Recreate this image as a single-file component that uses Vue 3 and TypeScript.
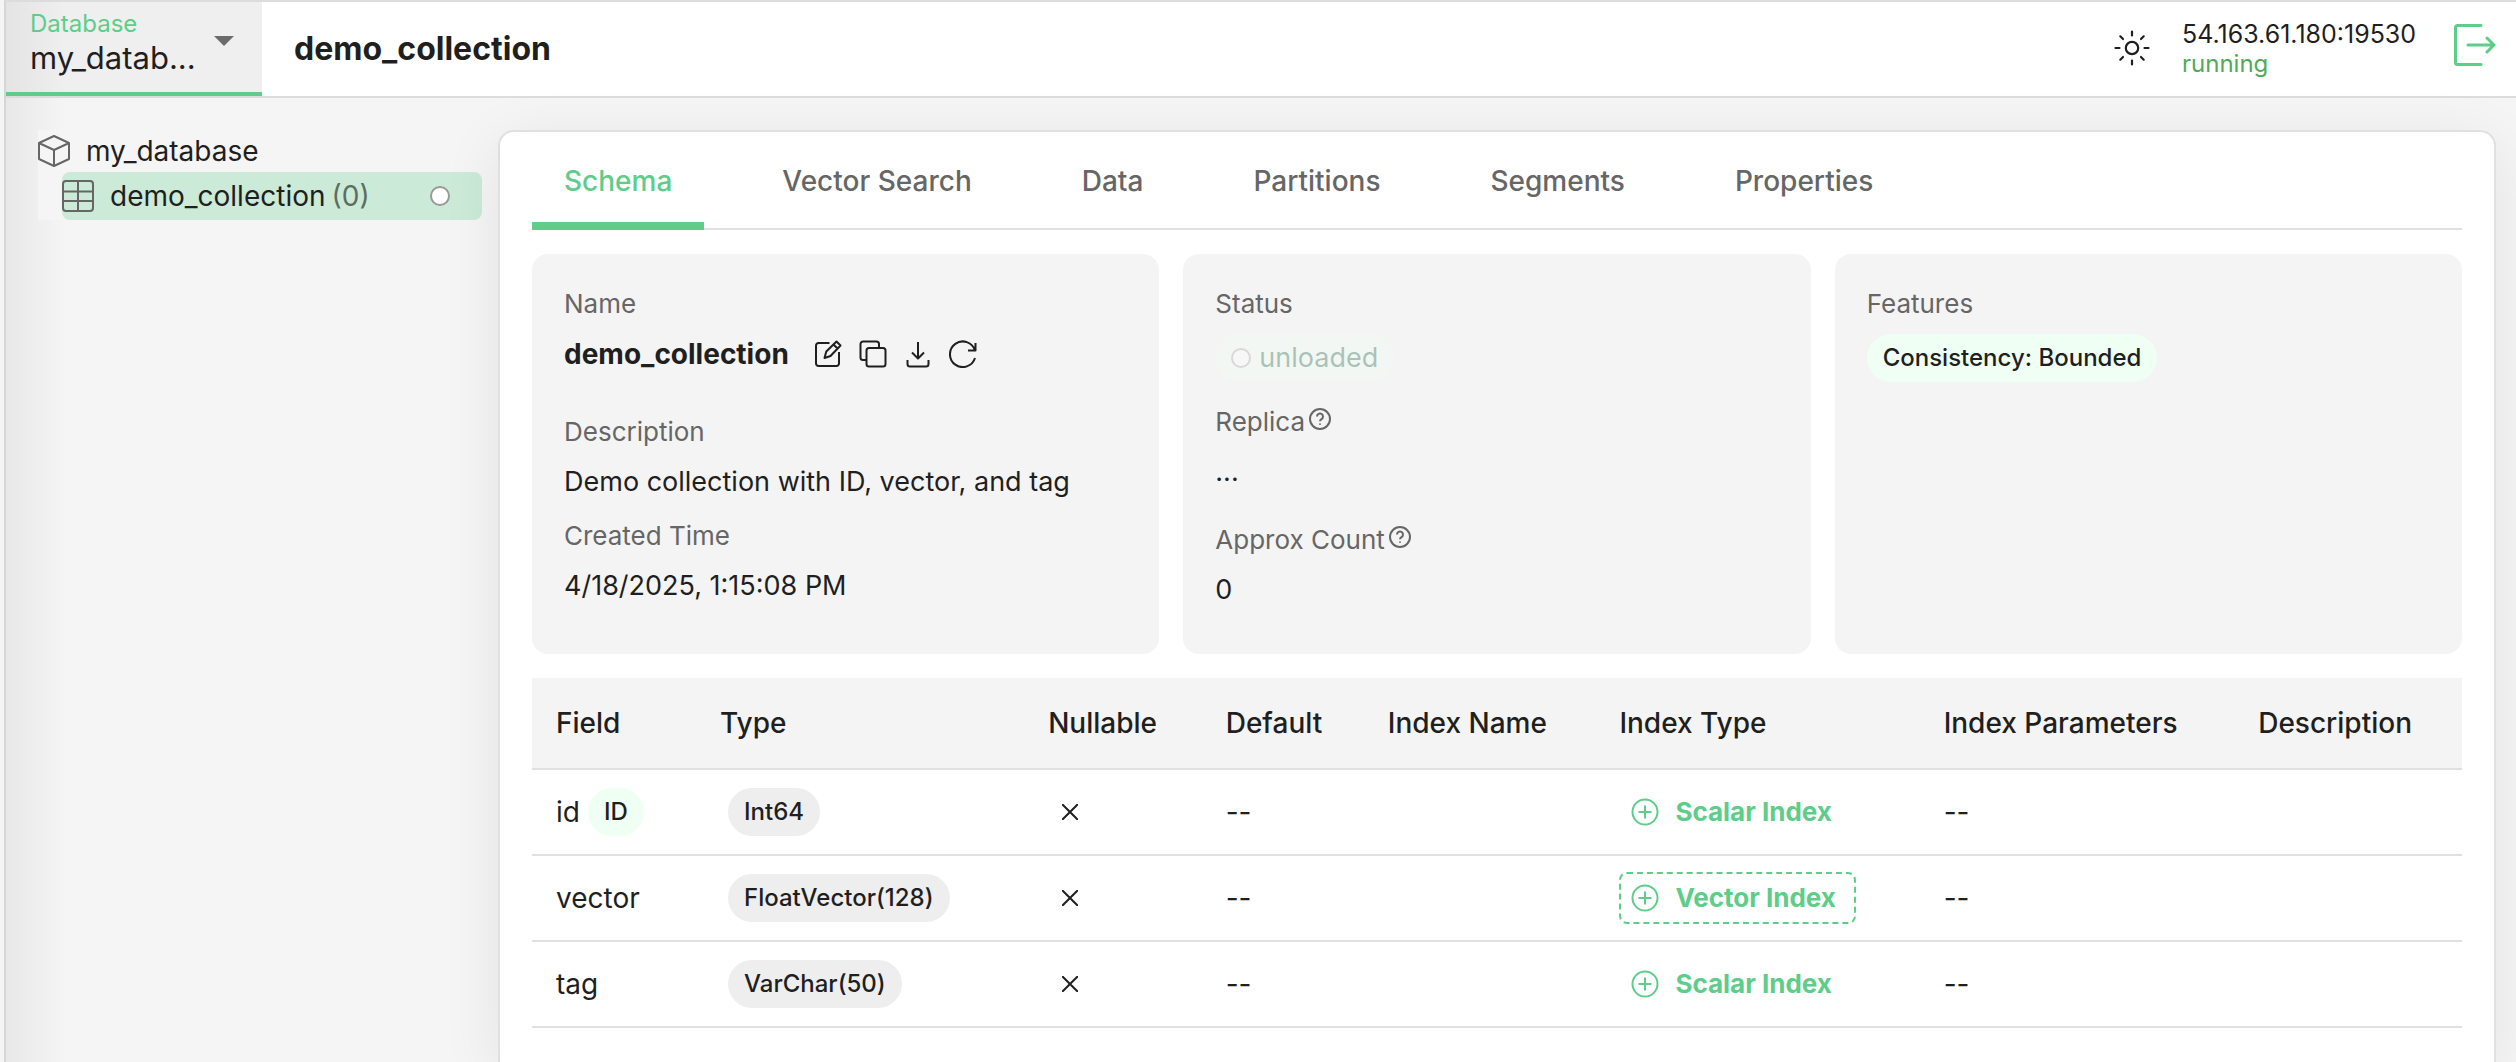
<script setup lang="ts">
import { ref } from 'vue'

interface FieldRow {
  name: string
  tag?: string
  type: string
  defaultValue: string
  index: string
  highlighted?: boolean
  params: string
}

const tabs: string[] = ['Schema', 'Vector Search', 'Data', 'Partitions', 'Segments', 'Properties']
const activeTab = ref<string>('Schema')

const fields: FieldRow[] = [
  { name: 'id', tag: 'ID', type: 'Int64', defaultValue: '--', index: 'Scalar Index', params: '--' },
  { name: 'vector', type: 'FloatVector(128)', defaultValue: '--', index: 'Vector Index', highlighted: true, params: '--' },
  { name: 'tag', type: 'VarChar(50)', defaultValue: '--', index: 'Scalar Index', params: '--' },
]
</script>

<template>
  <div class="app">
    <header class="topbar">
      <div class="db-select">
        <label class="db-label" for="database">Database</label>
        <select id="database" class="db-input">
          <option>my_datab...</option>
        </select>
        <svg class="db-arrow" viewBox="0 0 20 10" aria-hidden="true"><path d="M0 0h20L10 10z" fill="#6b6b6b" /></svg>
      </div>
      <h1 class="title">demo_collection</h1>
      <button class="icon-btn theme" aria-label="Toggle theme">
        <svg width="36" height="36" viewBox="0 0 36 36" fill="none" stroke="#1f1f1f" stroke-width="2.2" stroke-linecap="round">
          <circle cx="18" cy="18" r="6.200" />
          <path d="M18 1.500v4M18 30.500v4M1.500 18h4M30.500 18h4M6.300 6.300l2.700 2.700M27 27l2.700 2.700M6.300 29.700L9 27M27 9l2.700-2.700" />
        </svg>
      </button>
      <div class="server">
        <span class="address">54.163.61.180:19530</span>
        <span class="running">running</span>
      </div>
      <button class="icon-btn logout" aria-label="Disconnect">
        <svg width="42" height="42" viewBox="0 0 42 42" fill="none" stroke="#5ecd8a" stroke-width="3" stroke-linecap="round" stroke-linejoin="round">
          <path d="M27 1.500H3.500a2 2 0 0 0-2 2v35a2 2 0 0 0 2 2H27" />
          <path d="M14 21h25M33 14l7 7-7 7" stroke-linejoin="miter" />
        </svg>
      </button>
    </header>

    <div class="body">
      <nav class="tree">
        <a class="node" href="#database">
          <svg width="32" height="32" viewBox="0 0 32 32" fill="none" stroke="#666" stroke-width="2" stroke-linejoin="round">
            <path d="M16 1l15 7v16l-15 7L1 24V8zM1 8l15 7 15-7M16 15v16" />
          </svg>
          <span class="node-text">my_database</span>
        </a>
        <a class="node child" href="#collection">
          <svg width="32" height="32" viewBox="0 0 32 32" fill="none" stroke="#666" stroke-width="2">
            <rect x="1" y="1" width="30" height="30" rx="3" /><path d="M1 11.500h30M1 21h30M16 1v30" />
          </svg>
          <span class="node-text">demo_collection</span>
          <span class="count">(0)</span>
          <i class="dot"></i>
        </a>
      </nav>

      <main class="panel">
        <div class="tabs" role="tablist">
          <button
            v-for="tab in tabs"
            :key="tab"
            class="tab"
            :class="{ active: tab === activeTab }"
            role="tab"
            :aria-selected="tab === activeTab"
            @click="activeTab = tab"
          >{{ tab }}</button>
        </div>

        <section class="cards">
          <div class="card">
            <div class="label">Name</div>
            <div class="name-row">
              <strong>demo_collection</strong>
              <button class="icon-btn" aria-label="Rename">
                <svg class="tool" viewBox="0 0 28 28"><path d="M15.500 3H4.500A2.500 2.500 0 0 0 2 5.500v18A2.500 2.500 0 0 0 4.500 26h18a2.500 2.500 0 0 0 2.500-2.500V12M10.500 18l1.800-6.500L22.500 1.500l4 4L16.500 16zM19.500 4.500l4 4" /></svg>
              </button>
              <button class="icon-btn" aria-label="Duplicate">
                <svg class="tool" viewBox="0 0 28 28"><rect x="7.500" y="8" width="19" height="18.500" rx="2.500" /><path d="M7.500 20H4a2.500 2.500 0 0 1-2.500-2.500V4A2.500 2.500 0 0 1 4 1.500h13.500A2.500 2.500 0 0 1 20 4v4" /></svg>
              </button>
              <button class="icon-btn" aria-label="Download">
                <svg class="tool" viewBox="0 0 28 28"><path d="M14 2v16M8 12.500l6 6 6-6M3.500 20v4A2.500 2.500 0 0 0 6 26.500h16a2.500 2.500 0 0 0 2.500-2.500v-4" /></svg>
              </button>
              <button class="icon-btn" aria-label="Refresh">
                <svg class="tool" viewBox="0 0 28 28"><path d="M26.500 3v7.500H19M26 10.500A12.800 12.800 0 1 0 26 18" /></svg>
              </button>
            </div>
            <div class="label description">Description</div>
            <div class="value">Demo collection with ID, vector, and tag</div>
            <div class="label">Created Time</div>
            <div class="value">4/18/2025, 1:15:08 PM</div>
          </div>

          <div class="card">
            <div class="label">Status</div>
            <div class="pill status"><i class="dot"></i>unloaded</div>
            <div class="label replica">Replica
              <svg class="help" viewBox="0 0 22 22"><circle cx="11" cy="11" r="10" /><path d="M8 8.500a3 3 0 1 1 4.500 2.600c-1 .6-1.500 1.100-1.500 2.200M11 15.500v1.200" /></svg>
            </div>
            <div class="value">...</div>
            <div class="label approx">Approx Count
              <svg class="help" viewBox="0 0 22 22"><circle cx="11" cy="11" r="10" /><path d="M8 8.500a3 3 0 1 1 4.500 2.600c-1 .6-1.500 1.100-1.500 2.200M11 15.500v1.200" /></svg>
            </div>
            <div class="value">0</div>
          </div>

          <div class="card">
            <div class="label">Features</div>
            <div class="pill">Consistency: Bounded</div>
          </div>
        </section>

        <table class="fields">
          <colgroup>
            <col class="c-field" /><col class="c-type" /><col class="c-null" /><col class="c-default" />
            <col class="c-iname" /><col class="c-itype" /><col class="c-params" /><col />
          </colgroup>
          <thead>
            <tr>
              <th>Field</th><th>Type</th><th>Nullable</th><th>Default</th>
              <th>Index Name</th><th>Index Type</th><th>Index Parameters</th><th>Description</th>
            </tr>
          </thead>
          <tbody>
            <tr v-for="field in fields" :key="field.name">
              <td><div class="cell">{{ field.name }}<span v-if="field.tag" class="pill">{{ field.tag }}</span></div></td>
              <td><div class="cell"><span class="pill type">{{ field.type }}</span></div></td>
              <td>
                <div class="cell">
                  <svg class="cross" viewBox="0 0 16 16" role="img" aria-label="No"><path d="M0 0l16 16M16 0L0 16" /></svg>
                </div>
              </td>
              <td>{{ field.defaultValue }}</td>
              <td></td>
              <td>
                <button class="index-btn" :class="{ highlighted: field.highlighted }">
                  <svg width="28" height="28" viewBox="0 0 28 28" fill="none" stroke="#5ecd8a" stroke-width="2"><circle cx="14" cy="14" r="12.500" /><path d="M14 7.500v13M7.500 14h13" /></svg>
                  {{ field.index }}
                </button>
              </td>
              <td>{{ field.params }}</td>
              <td></td>
            </tr>
          </tbody>
        </table>
      </main>
    </div>
  </div>
</template>

<style>
body {
  background: #f5f5f5;
}
</style>

<style scoped>
.app {
  box-sizing: border-box;
  min-height: 100vh;
  display: flex;
  flex-direction: column;
  margin-left: 4px;
  border-left: 2px solid #d6d6d6;
  border-top: 2px solid #dcdcdc;
  background: linear-gradient(to right, #e8e8e8, #f5f5f5 60px);
  color: #1f1f1f;
  font-family: Inter, "Liberation Sans", sans-serif;
  font-size: 28px;
  line-height: 40px;
  overflow: hidden;
}
button {
  font: inherit;
  color: inherit;
  background: none;
  border: 0;
  padding: 0;
}
svg {
  display: block;
  flex: none;
}
.topbar {
  display: flex;
  align-items: center;
  height: 94px;
  padding-right: 20px;
  background: #fff;
  border-bottom: 2px solid #dcdcdc;
}
.db-select {
  box-sizing: border-box;
  position: relative;
  width: 256px;
  height: 94px;
  padding: 8px 24px;
  background: linear-gradient(to right, #e4e4e4, #efefef 60px);
  border-bottom: 4px solid #5ecd8a;
}
.db-label {
  display: block;
  font-size: 24px;
  line-height: 28px;
  color: #5ecd8a;
}
.db-input {
  appearance: none;
  display: block;
  width: 100%;
  height: 38px;
  padding: 0;
  border: 0;
  background: none;
  color: inherit;
  font-family: inherit;
  font-size: 31px;
}
.db-arrow {
  position: absolute;
  right: 28px;
  top: 34px;
  width: 20px;
  height: 10px;
}
.title {
  flex: 1;
  margin: 0 0 0 32px;
  font-size: 32px;
  font-weight: 700;
}
.icon-btn {
  display: block;
}
.theme {
  margin: 0 32px 2px 0;
}
.logout {
  margin-bottom: 8px;
}
.server {
  display: flex;
  flex-direction: column;
  min-width: 236px;
  margin-right: 36px;
  font-size: 24px;
  line-height: 30px;
}
.address {
  font-size: 25px;
}
.running {
  color: #4fab58;
}
.body {
  flex: 1;
  display: flex;
  align-items: stretch;
  padding: 32px 20px 0 32px;
}
.tree {
  flex: none;
  width: 444px;
  margin-right: 16px;
  align-self: flex-start;
  background: #f5f5f5;
}
.node {
  display: flex;
  align-items: center;
  height: 42px;
  color: inherit;
  text-decoration: none;
}
.node-text {
  margin-left: 16px;
}
.child {
  height: 48px;
  margin-left: 24px;
  border-radius: 8px;
  background: #cbead7;
}
.count {
  margin-left: 6px;
  color: #5c6e63;
}
.dot {
  box-sizing: border-box;
  width: 20px;
  height: 20px;
  border: 2px solid #999;
  border-radius: 50%;
  background: #fff;
}
.child .dot {
  margin: 0 32px 0 auto;
}
.panel {
  flex: 1;
  min-width: 0;
  padding: 0 32px;
  border: 2px solid #e0e0e0;
  border-bottom: 0;
  border-radius: 16px 16px 0 0;
  background: #fff;
  box-shadow: 0 12px 60px rgba(0, 0, 0, 0.08);
}
.tabs {
  display: flex;
  gap: 46px;
  height: 96px;
  border-bottom: 2px solid #e0e0e0;
}
.tab {
  height: 98px;
  padding: 8px 32px 0;
  border-bottom: 8px solid transparent;
  color: #666;
  font-weight: 500;
}
.tab.active {
  color: #5ecd8a;
  border-color: #5ecd8a;
}
.cards {
  display: grid;
  grid-template-columns: repeat(3, 1fr);
  gap: 24px;
  margin: 24px 0;
}
.card {
  box-sizing: border-box;
  min-height: 400px;
  padding: 32px 32px 24px;
  border-radius: 16px;
  background: #f4f4f4;
}
.label {
  display: flex;
  gap: 4px;
  color: #666;
  font-size: 26px;
  line-height: 36px;
}
.value {
  padding: 12px 0 16px;
  font-size: 27px;
}
.name-row {
  display: flex;
  align-items: center;
  gap: 17px;
  height: 40px;
  margin: 12px 0 16px;
}
.name-row strong {
  margin-right: 8px;
  font-weight: 700;
}
.description {
  padding-top: 24px;
}
.replica {
  padding-top: 22px;
}
.approx {
  padding-top: 14px;
}
.tool {
  width: 28px;
  height: 28px;
  fill: none;
  stroke: #1f1f1f;
  stroke-width: 2;
  stroke-linejoin: round;
}
.help {
  width: 22px;
  height: 22px;
  margin-top: 4px;
  fill: none;
  stroke: #666;
  stroke-width: 2;
}
.pill {
  display: inline-flex;
  align-items: center;
  height: 48px;
  padding: 0 16px;
  border-radius: 24px;
  background: #f0fff4;
  font-size: 24px;
  font-weight: 500;
}
.card .pill {
  display: flex;
  width: fit-content;
  margin-top: 12px;
}
.card .status {
  gap: 8px;
  color: #00532f;
  font-size: 27px;
  font-weight: 400;
  opacity: 0.3;
}
.fields {
  width: 100%;
  border-collapse: collapse;
  table-layout: fixed;
}
.fields th,
.fields td {
  box-sizing: border-box;
  padding: 0 0 0 24px;
  border-bottom: 2px solid #e0e0e0;
  text-align: left;
}
.fields th {
  height: 91px;
  background: #f4f4f4;
  font-weight: 500;
}
.fields td {
  height: 86px;
}
.c-field { width: 8.5%; }
.c-type { width: 17%; }
.c-null { width: 9.2%; }
.c-default { width: 8.4%; }
.c-iname { width: 12%; }
.c-itype { width: 16.8%; }
.c-params { width: 16.3%; }
.cell {
  display: flex;
  align-items: center;
  gap: 8px;
}
.type {
  margin-left: 8px;
  background: #eee;
}
.cross {
  width: 16px;
  height: 16px;
  margin-left: 14px;
  fill: none;
  stroke: #1f1f1f;
  stroke-width: 2;
}
.index-btn {
  display: flex;
  align-items: center;
  gap: 16px;
  height: 52px;
  padding: 0 18px 0 10px;
  border: 2px dashed transparent;
  border-radius: 8px;
  color: #5ecd8a;
  font-size: 26px;
  font-weight: 700;
}
.index-btn.highlighted {
  border-color: #5ecd8a;
}
</style>
